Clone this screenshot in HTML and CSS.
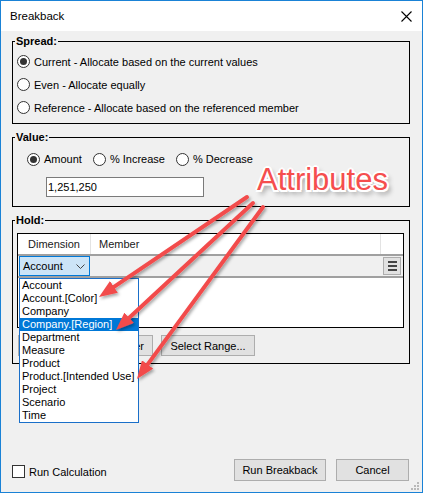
FILE: index.html
```html
<!DOCTYPE html>
<html>
<head>
<meta charset="utf-8">
<link rel="stylesheet" href="styles.css">
</head>
<body>
<div class="window">
  <div class="titlebar">
    <span class="title">Breakback</span>
    <svg class="close" width="11" height="11" viewBox="0 0 11 11"><path d="M0.5,0.5 L10.5,10.5 M10.5,0.5 L0.5,10.5" stroke="#000" stroke-width="1.1" fill="none"/></svg>
  </div>
  <div class="body">
    <fieldset class="group group-spread">
      <legend class="group-title">Spread:</legend>
      <div class="radio-row"><span class="radio checked"></span><span class="label">Current - Allocate based on the current values</span></div>
      <div class="radio-row"><span class="radio"></span><span class="label">Even - Allocate equally</span></div>
      <div class="radio-row"><span class="radio"></span><span class="label">Reference - Allocate based on the referenced member</span></div>
    </fieldset>
    <fieldset class="group group-value">
      <legend class="group-title">Value:</legend>
      <div class="radio-inline">
        <div class="radio-item"><span class="radio checked"></span><span class="label">Amount</span></div>
        <div class="radio-item"><span class="radio"></span><span class="label">% Increase</span></div>
        <div class="radio-item"><span class="radio"></span><span class="label">% Decrease</span></div>
      </div>
      <div class="textbox">1,251,250</div>
    </fieldset>
    <fieldset class="group group-hold">
      <legend class="group-title">Hold:</legend>
      <div class="grid">
        <div class="grid-head">
          <div class="col col-dim">Dimension</div>
          <div class="col col-mem">Member</div>
          <div class="col col-end"></div>
        </div>
        <div class="grid-row">
          <div class="combo"><span>Account</span><svg class="chev" width="9" height="5" viewBox="0 0 9 5"><path d="M0.5,0.5 L4.5,4.5 L8.5,0.5" stroke="#444" stroke-width="1" fill="none"/></svg></div>
          <div class="menu-btn"><span class="bar"></span><span class="bar"></span><span class="bar"></span></div>
        </div>
        <div class="grid-empty"></div>
      </div>
      <div class="hold-buttons">
        <div class="btn btn-clear"></div>
        <div class="btn btn-member">Select Member</div>
        <div class="btn btn-range">Select Range...</div>
      </div>
    </fieldset>
    <div class="footer">
      <div class="check-wrap"><span class="checkbox"></span><span class="label">Run Calculation</span></div>
      <div class="footer-buttons">
        <div class="btn btn-run">Run Breakback</div>
        <div class="btn btn-cancel">Cancel</div>
      </div>
    </div>
  </div>
  <ul class="dropdown">
    <li>Account</li>
    <li>Account.[Color]</li>
    <li>Company</li>
    <li class="selected">Company.[Region]</li>
    <li>Department</li>
    <li>Measure</li>
    <li>Product</li>
    <li>Product.[Intended Use]</li>
    <li>Project</li>
    <li>Scenario</li>
    <li>Time</li>
  </ul>
  <div class="callout">Attributes</div>
  <svg class="arrows" width="423" height="493" viewBox="0 0 423 493">
    <defs>
      <marker id="ah" markerUnits="userSpaceOnUse" markerWidth="18" markerHeight="14" refX="8" refY="7" orient="auto">
        <path d="M0,0 L18,7 L0,14 Z" fill="#f24c4c"/>
      </marker>
      <filter id="sh" x="-20%" y="-20%" width="140%" height="140%">
        <feDropShadow dx="1.5" dy="2" stdDeviation="1.5" flood-color="#000" flood-opacity="0.35"/>
      </filter>
    </defs>
    <g filter="url(#sh)" stroke="#f24c4c" stroke-width="4" stroke-linecap="round" fill="none">
      <path d="M247,197 L107.3,291.4" marker-end="url(#ah)"/>
      <path d="M253,203 L123.3,323.2" marker-end="url(#ah)"/>
      <path d="M263,207 L142.9,370.9" marker-end="url(#ah)"/>
    </g>
  </svg>
  <svg class="grip" width="9" height="9" viewBox="0 0 9 9">
    <rect x="6" y="0" width="2" height="2" fill="#b8b8b8"/>
    <rect x="3" y="3" width="2" height="2" fill="#b8b8b8"/>
    <rect x="6" y="3" width="2" height="2" fill="#b8b8b8"/>
    <rect x="0" y="6" width="2" height="2" fill="#b8b8b8"/>
    <rect x="3" y="6" width="2" height="2" fill="#b8b8b8"/>
    <rect x="6" y="6" width="2" height="2" fill="#b8b8b8"/>
  </svg>
</div>
</body>
</html>
```
FILE: styles.css
```css
html, body {
  margin: 0;
  padding: 0;
}
body {
  font-family: "Liberation Sans", Arial, sans-serif;
  font-size: 11px;
  color: #000;
}
.window {
  position: relative;
  width: 423px;
  height: 493px;
  box-sizing: border-box;
  border: 1px solid #1a82d6;
  display: flex;
  flex-direction: column;
  background: #f0f0f0;
  overflow: hidden;
}
.titlebar {
  height: 30px;
  background: #fff;
  display: flex;
  align-items: center;
  justify-content: space-between;
  padding: 0 10px 0 9px;
  flex: none;
}
.title {
  font-size: 11.5px;
}
.close {
  display: block;
}
.body {
  flex: 1;
  display: flex;
  flex-direction: column;
  padding: 3px 12px 11px 11px;
  min-height: 0;
}
.group {
  margin: 0;
  border: 1px solid #000;
  padding: 2px 5px 4px 4px;
  min-inline-size: auto;
}
.group-title {
  margin-left: -2px;
  padding: 0 1px;
  font-weight: bold;
  line-height: 14px;
}
.group-value, .group-hold {
  margin-top: 6px;
}
.group-value {
  padding-top: 3px;
  padding-bottom: 9px;
}
.group-hold {
  padding-top: 6px;
  padding-bottom: 7px;
}
.radio-row {
  height: 23px;
  display: flex;
  align-items: center;
}
.radio {
  width: 13px;
  height: 13px;
  box-sizing: border-box;
  border: 1px solid #333;
  border-radius: 50%;
  background: #fff;
  display: flex;
  align-items: center;
  justify-content: center;
  flex: none;
}
.radio.checked::after {
  content: "";
  width: 7px;
  height: 7px;
  border-radius: 50%;
  background: #333;
}
.radio + .label {
  margin-left: 4px;
  white-space: nowrap;
}
.radio-inline {
  height: 24px;
  display: flex;
  align-items: center;
  gap: 11px;
  padding-left: 10px;
}
.radio-item {
  display: flex;
  align-items: center;
}
.textbox {
  margin: 6px 0 0 29px;
  width: 158px;
  height: 20px;
  box-sizing: border-box;
  border: 1px solid #7a7a7a;
  background: #fff;
  padding-left: 1px;
  display: flex;
  align-items: center;
}
.grid {
  border: 1px solid #000;
  background: #fff;
  height: 95px;
  box-sizing: border-box;
  display: flex;
  flex-direction: column;
}
.grid-head {
  display: flex;
  height: 20px;
  border-bottom: 2px solid #a0a0a0;
  flex: none;
}
.col {
  box-sizing: border-box;
  display: flex;
  align-items: center;
  color: #1a1a1a;
}
.col-dim {
  width: 73px;
  padding-left: 10px;
  border-right: 1px solid #e3e3e3;
}
.col-mem {
  width: 290px;
  padding-left: 8px;
  border-right: 1px solid #e3e3e3;
}
.col-end {
  flex: 1;
}
.grid-row {
  display: flex;
  align-items: center;
  height: 20px;
  background: #f0f0f0;
  border-bottom: 2px solid #a0a0a0;
  flex: none;
}
.combo {
  margin-left: 1px;
  width: 71px;
  height: 20px;
  box-sizing: border-box;
  border: 1px solid #0078d7;
  background: #cce4f7;
  display: flex;
  align-items: center;
  justify-content: space-between;
  padding: 0 4px 0 3px;
}
.chev {
  display: block;
}
.menu-btn {
  margin-left: auto;
  margin-right: 2px;
  width: 18px;
  height: 18px;
  box-sizing: border-box;
  border: 1px solid #adadad;
  background: #e1e1e1;
  display: flex;
  flex-direction: column;
  align-items: center;
  justify-content: center;
  gap: 2px;
}
.bar {
  width: 9px;
  height: 2px;
  background: #444;
}
.grid-empty {
  flex: 1;
}
.hold-buttons {
  margin-top: 7px;
  margin-left: 1px;
  display: flex;
  gap: 8px;
}
.btn {
  height: 21px;
  box-sizing: border-box;
  border: 1px solid #adadad;
  background: #e1e1e1;
  display: flex;
  align-items: center;
  justify-content: center;
  white-space: nowrap;
}
.btn-clear { width: 35px; }
.btn-member { width: 92px; }
.btn-range { width: 94px; }
.footer {
  margin-top: auto;
  height: 22px;
  display: flex;
  align-items: center;
  justify-content: space-between;
  margin-right: 1px;
}
.check-wrap {
  display: flex;
  align-items: center;
  margin-top: 3px;
}
.checkbox {
  width: 13px;
  height: 13px;
  box-sizing: border-box;
  border: 1px solid #333;
  background: #fff;
}
.checkbox + .label {
  margin-left: 4px;
}
.footer-buttons {
  display: flex;
  gap: 10px;
}
.footer-buttons .btn {
  height: 22px;
}
.btn-run { width: 92px; }
.btn-cancel { width: 73px; }
.dropdown {
  position: absolute;
  left: 18px;
  top: 277px;
  width: 120px;
  margin: 0;
  padding: 0;
  list-style: none;
  box-sizing: border-box;
  border: 1px solid #1a6fc9;
  background: #fff;
}
.dropdown li {
  height: 13px;
  line-height: 13px;
  padding-left: 2px;
  white-space: nowrap;
}
.dropdown li.selected {
  background: #0078d7;
  color: #fff;
}
.callout {
  position: absolute;
  left: 256px;
  top: 163px;
  font-size: 31px;
  line-height: 31px;
  color: #f54e4e;
  white-space: nowrap;
  text-shadow:
    2px 0 0 #fff, -2px 0 0 #fff, 0 2px 0 #fff, 0 -2px 0 #fff,
    1.5px 1.5px 0 #fff, -1.5px 1.5px 0 #fff, 1.5px -1.5px 0 #fff, -1.5px -1.5px 0 #fff,
    3px 4px 5px rgba(0,0,0,0.45);
}
.arrows {
  position: absolute;
  left: -1px;
  top: -1px;
  pointer-events: none;
}
.grip {
  position: absolute;
  right: 2px;
  bottom: 1px;
}
```
